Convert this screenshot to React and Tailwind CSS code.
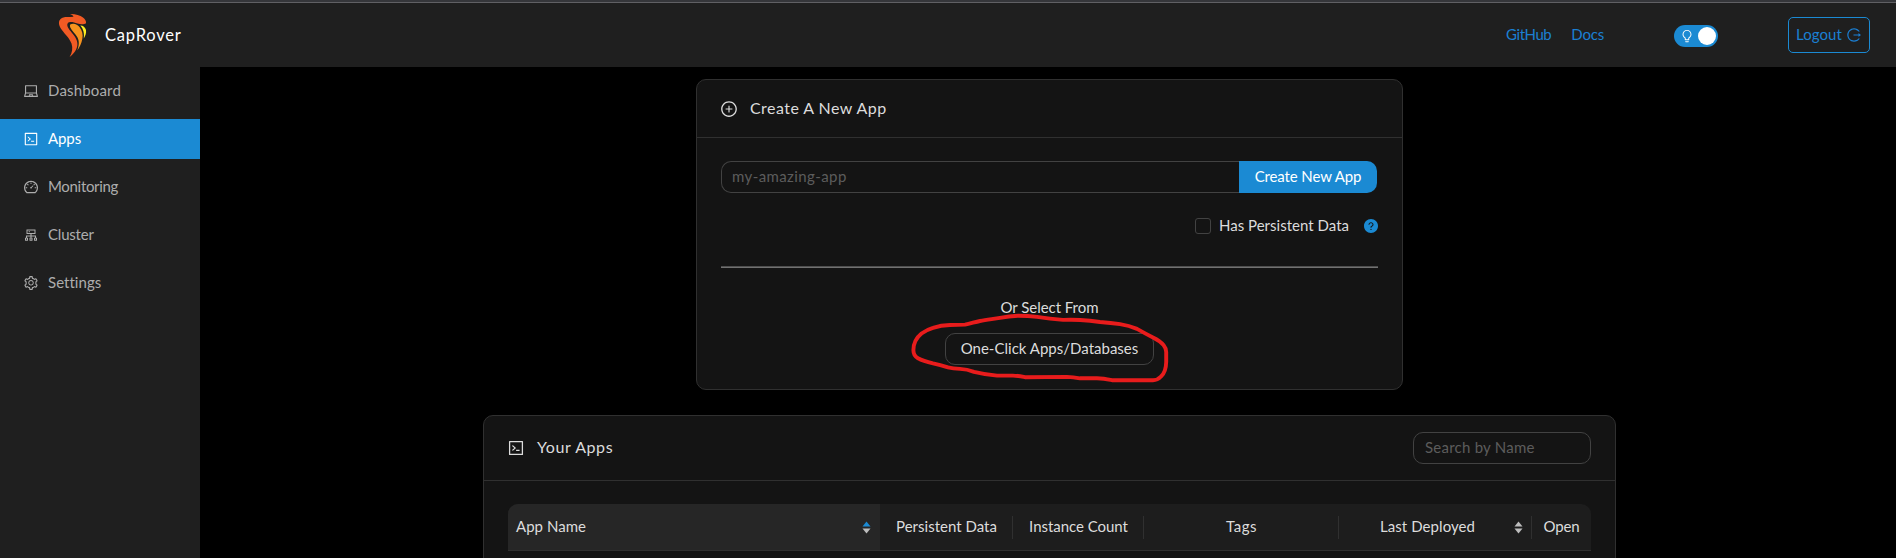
import React from "react";
import {
  AiOutlineLaptop,
  AiOutlineCode,
  AiOutlineDashboard,
  AiOutlineCluster,
  AiOutlineSetting,
  AiOutlinePlusCircle,
  AiOutlineLogout,
  AiOutlineBulb,
  AiFillQuestionCircle,
} from "react-icons/ai";

const menu = [
  { label: "Dashboard", Icon: AiOutlineLaptop, tracking: "-translate-y-px tracking-[0.17px]" },
  { label: "Apps", Icon: AiOutlineCode, tracking: "-translate-y-px tracking-[-0.1px]", active: true },
  { label: "Monitoring", Icon: AiOutlineDashboard, tracking: "-translate-y-px tracking-[-0.32px]" },
  { label: "Cluster", Icon: AiOutlineCluster, tracking: "-translate-y-px tracking-[-0.2px]" },
  { label: "Settings", Icon: AiOutlineSetting, tracking: "-translate-y-px tracking-[0.04px]" },
];

function Logo() {
  return (
    <svg className="h-12 w-8" viewBox="56 12 32 48">
      <path
        fill="#f15a24"
        d="M70 15C74 14.6 80 16 83 18.5C85 20 86.5 22.3 86 24.3C84 25.6 80.5 25.6 77.5 24.6C73.5 23 69.5 22.3 67.8 24.2C66.4 26 68 29 70.500 32C74 36.500 77.400 40 77.400 45C77.400 50.500 74 54.500 69.600 58C72.300 53.500 73 49 71.500 44.500C69 38 63.500 34 60.500 29C58 24.500 58.500 20.500 62.500 18.800C66 17.500 70 18.200 73.500 17.800C73 16.200 71.500 15.600 70 15Z"
      />
      <path
        fill="#f7931e"
        d="M70.200 25.600C73.500 23.700 77.500 25.500 79.500 28C82.200 31.500 83.300 35.500 82.300 40C81.500 44.500 79.500 48.500 77.300 51.500C79 46.500 79.500 42.500 77.500 38.500C75.500 34.500 71.500 31.500 70.300 28.500C69.900 27.300 69.800 26.300 70.200 25.600Z"
      />
      <path
        fill="#fcee21"
        d="M80.300 26.500C83 26.400 85.300 28.300 86 31C86.500 34 85.300 37 83.800 39.500C84.400 35 83.800 30.500 80.300 26.500Z"
      />
    </svg>
  );
}

function Sorter({ ascending }) {
  return (
    <svg className="h-[13px] w-[9px] shrink-0" viewBox="0 0 9 13">
      <path d="M4.500 0.500 8.500 5.500H0.500Z" fill={ascending ? "#1b8ad3" : "#bdbdbd"} />
      <path d="M4.500 12.500 8.500 7.500H0.500Z" fill="#bdbdbd" />
    </svg>
  );
}

function Divider() {
  return <span className="h-[23px] w-px shrink-0 bg-[#303030]" />;
}

function CircledHint() {
  return (
    <svg
      className="pointer-events-none absolute left-[910px] top-[310px] h-[76px] w-[260px]"
      viewBox="910 310 260 76"
      fill="none"
    >
      <path
        stroke="#e81c1c"
        strokeWidth="3.900"
        strokeLinejoin="round"
        d="M965 324.600C970 323.700 975 322 980 321C987 319.800 994 318.800 1000 317.800Q1009 316.200 1018 315.800Q1028 315.800 1037 316.900Q1050 319 1063 319.900Q1072 319.500 1080 320Q1090 320.700 1100 322Q1111 322.700 1120 324.200Q1129 325.600 1137 328.900Q1146 334 1153 337.500Q1160 341 1163.500 345Q1166 348 1166.200 352V362Q1166 372 1161 376.500Q1157.500 380.200 1153 380.200H1112Q1103 378.500 1097 378.300H1080Q1073 377 1067 376.900L1025 377.200Q1018 375.800 1013 375.600H997Q985 374.500 974 371.800Q967 369.200 960 368.900Q953 368.500 948 367.400Q940 364.800 933 363.400Q923 361 918 358.300Q913.300 355.500 913.400 350Q913.500 340 921.500 333.500Q927 329.500 933 327.800Q941 325.200 950 325Z"
      />
    </svg>
  );
}

export default function App() {
  return (
    <div className="relative flex h-[558px] w-[1896px] flex-col overflow-hidden bg-black font-['Lato','Liberation_Sans',sans-serif] text-[15px] leading-[22px] text-[#dcdcdc]">
      <div className="h-[3px] shrink-0 border-b border-[#606064] bg-[#35363a]" />
      <header className="flex h-16 shrink-0 items-center bg-[#1f1f1f] pl-[56px] pr-[26px]">
        <Logo />
        <h3 className="ml-[17px] w-[90px] text-[16.500px] tracking-[0.8px] text-white">CapRover</h3>
        <nav className="ml-auto flex -translate-y-px items-center text-[#1b7fd3]">
          <a className="tracking-[-0.45px]">GitHub</a>
          <a className="ml-[20px] tracking-[-0.2px]">Docs</a>
        </nav>
        <div className="ml-[70px] mt-[2px] flex h-[22px] w-11 items-center justify-between rounded-full bg-[#1b8ad3] pl-[6px] pr-[2px]">
          <AiOutlineBulb className="size-[14px] text-white" />
          <span className="size-[18px] rounded-full bg-white" />
        </div>
        <button className="ml-[70px] flex h-9 w-[82px] items-center justify-center gap-[4px] rounded-[5px] border border-[#1b8ad3] text-[#1b7fd3]">
          <span className="-translate-y-px tracking-[0.08px]">Logout</span>
          <AiOutlineLogout className="size-4" />
        </button>
      </header>

      <div className="flex min-h-0 flex-1">
        <aside className="flex w-[200px] shrink-0 flex-col gap-2 bg-[#1f1f1f] pt-1">
          {menu.map(({ label, Icon, tracking, active }) => (
            <a
              key={label}
              className={
                active
                  ? "flex h-10 items-center gap-[9px] bg-[#1b8ad3] pl-[23px] text-white"
                  : "flex h-10 items-center gap-[9px] pl-[23px] text-[#adadad]"
              }
            >
              <Icon className="size-4" />
              <span className={tracking}>{label}</span>
            </a>
          ))}
        </aside>

        <main className="flex flex-1 flex-col items-center pl-[3px] pt-3">
          <section className="h-[311px] w-[707px] shrink-0 rounded-[10px] border border-[#303030] bg-[#141414]">
            <div className="flex h-[58px] items-center gap-3 border-b border-[#303030] pl-[23px] text-[16px]">
              <AiOutlinePlusCircle className="size-[18px]" />
              <span className="-translate-y-px tracking-[0.45px]">Create A New App</span>
            </div>
            <div className="flex flex-col px-6 pt-[23px]">
              <div className="mr-px flex h-8">
                <div className="flex flex-1 items-center rounded-l-[10px] border border-r-0 border-[#424242] pb-[2px] pl-[10px] tracking-[0.4px] text-[#5c5c5c]">
                  my-amazing-app
                </div>
                <button className="w-[138px] rounded-r-[10px] bg-[#1b8ad3] pb-[2px] tracking-[-0.12px] text-white">
                  Create New App
                </button>
              </div>
              <div className="mt-[22px] flex h-[22px] items-center justify-end">
                <span className="size-4 rounded-[3px] border border-[#424242]" />
                <span className="ml-2 -translate-y-px tracking-[0.02px]">Has Persistent Data</span>
                <AiFillQuestionCircle className="-mr-px ml-[14px] size-4 text-[#1b8ad3]" />
              </div>
              <div className="mt-[29px] h-[2px] border-b border-[#717171] bg-[#4e4e4e]" />
              <p className="mt-[28px] text-center tracking-[-0.04px]">Or Select From</p>
              <button className="mt-[15px] h-8 w-[209px] self-center rounded-[10px] border border-[#424242] pb-[2px] tracking-[0.01px]">
                One-Click Apps/Databases
              </button>
            </div>
          </section>

          <section className="mt-[25px] h-[200px] w-[1133px] shrink-0 rounded-t-[10px] border border-[#303030] bg-[#141414]">
            <div className="flex h-[65px] items-center border-b border-[#303030] pl-[23px] pr-6 text-[16px]">
              <AiOutlineCode className="size-[18px]" />
              <span className="ml-3 -translate-y-px tracking-[0.58px]">Your Apps</span>
              <div className="ml-auto flex h-8 w-[178px] items-center rounded-[10px] border border-[#424242] pb-[2px] pl-[11px] text-[15px] tracking-[0.24px] text-[#5c5c5c]">
                Search by Name
              </div>
            </div>
            <div className="mx-6 mt-[23px] flex h-[47px] items-center overflow-hidden rounded-t-[10px] border-b border-[#303030] bg-[#1d1d1d]">
              <div className="flex h-full w-[372px] shrink-0 items-center justify-between bg-[#262626] pl-2 pr-[9px]">
                <span className="-translate-y-px tracking-[0.04px]">App Name</span>
                <Sorter ascending />
              </div>
              <div className="w-[132px] -translate-y-px pl-px text-center tracking-[0.02px]">Persistent Data</div>
              <Divider />
              <div className="w-[130px] -translate-y-px pl-px text-center tracking-[-0.04px]">Instance Count</div>
              <Divider />
              <div className="w-[194px] -translate-y-px pl-px text-center tracking-[0.5px]">Tags</div>
              <Divider />
              <div className="flex w-[192px] items-center justify-between pl-[41px] pr-[8px]">
                <span className="-translate-y-px tracking-[0.07px]">Last Deployed</span>
                <Sorter />
              </div>
              <Divider />
              <div className="flex-1 -translate-y-px text-center tracking-[-0.1px]">Open</div>
            </div>
          </section>
        </main>
      </div>
      <CircledHint />
    </div>
  );
}
